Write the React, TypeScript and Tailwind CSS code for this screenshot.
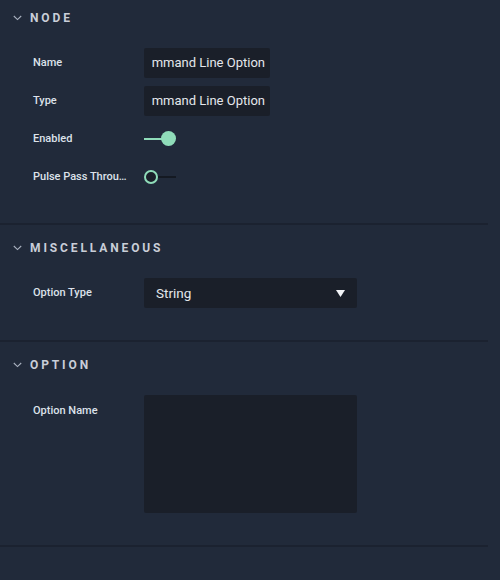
import type { ReactNode } from "react";

const font = { fontFamily: "Roboto, 'Noto Sans', sans-serif" };

function Chevron() {
  return (
    <svg className="h-[6px] w-[9px] text-[#aab2c0]" viewBox="0 0 9 6" fill="none" stroke="currentColor" strokeWidth={1.1}>
      <path d="M0.8 1l3.7 3.6L8.2 1" />
    </svg>
  );
}

function Section({ title, first, children }: { title: string; first?: boolean; children: ReactNode }) {
  return (
    <section className={`mr-[12px] border-b-2 border-[#1b2230] ${first ? "pb-[31px]" : "pt-[5px] pb-[32px]"}`}>
      <div className="flex h-[36px] items-center gap-[8px] pl-[13px]">
        <Chevron />
        <span className="text-[12px] font-bold tracking-[0.24em] text-[#c9ced8]">{title}</span>
      </div>
      <div className="mt-[12px] flex flex-col gap-[8px]">{children}</div>
    </section>
  );
}

function Row({ label, children, top }: { label: string; children: ReactNode; top?: boolean }) {
  return (
    <div className={`flex ${top ? "items-start" : "items-center"} min-h-[30px]`}>
      <div className={`w-[144px] shrink-0 truncate pl-[33px] pr-[17px] text-[11px] font-medium text-[#dde2ea] ${top ? "pt-[8px]" : ""}`}>
        {label}
      </div>
      {children}
    </div>
  );
}

function TextField({ value }: { value: string }) {
  return (
    <div className="h-[30px] w-[126px] rounded-[2px] bg-[#1a1f29] pl-[8px] pr-[5px]">
      <div className="flex h-full items-center justify-end overflow-hidden">
        <span className="whitespace-nowrap text-[13px] text-[#e4e7ec]">{value}</span>
      </div>
    </div>
  );
}

function Toggle({ on }: { on: boolean }) {
  return (
    <div className="relative h-[30px] w-[36px]">
      {on ? (
        <>
          <div className="absolute left-0 top-[14px] h-[2px] w-[20px] bg-[#8fdcb9]" />
          <div className="absolute left-[17px] top-[7px] h-[15px] w-[15px] rounded-full bg-[#8fdcb9]" />
        </>
      ) : (
        <>
          <div className="absolute left-[12px] top-[14px] h-[2px] w-[20px] bg-[#141922]" />
          <div className="absolute left-0 top-[8px] h-[14px] w-[14px] rounded-full border-2 border-[#8fdcb9] bg-[#1a1f29]" />
        </>
      )}
    </div>
  );
}

export default function App() {
  return (
    <div className="h-[580px] w-[500px] overflow-hidden bg-[#212a3a]" style={font}>
      <Section title="NODE" first>
        <Row label="Name">
          <TextField value="Command Line Option" />
        </Row>
        <Row label="Type">
          <TextField value="Command Line Option" />
        </Row>
        <Row label="Enabled">
          <Toggle on />
        </Row>
        <Row label="Pulse Pass Through">
          <Toggle on={false} />
        </Row>
      </Section>

      <Section title="MISCELLANEOUS">
        <Row label="Option Type">
          <div className="flex h-[30px] w-[213px] items-center justify-between rounded-[2px] bg-[#1a1f29] pl-[12px] pr-[12px]">
            <span className="text-[13.5px] text-[#e4e7ec]">String</span>
            <svg className="h-[7px] w-[9px]" viewBox="0 0 9 7">
              <path d="M0 0h9L4.5 7z" fill="#f2f4f7" />
            </svg>
          </div>
        </Row>
      </Section>

      <Section title="OPTION">
        <Row label="Option Name" top>
          <div className="h-[118px] w-[213px] rounded-[2px] bg-[#1a1f29]" />
        </Row>
      </Section>
    </div>
  );
}
